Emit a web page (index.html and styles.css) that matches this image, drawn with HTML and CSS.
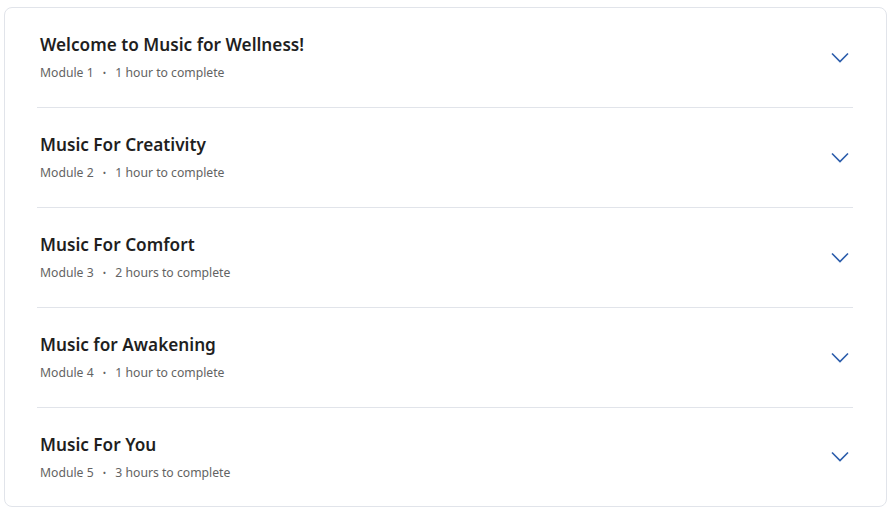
FILE: index.html
```html
<!DOCTYPE html>
<html lang="en">
<head>
<meta charset="UTF-8">
<meta name="viewport" content="width=device-width, initial-scale=1.0">
<link rel="stylesheet" href="styles.css">
<title>Modules</title>
</head>
<body>
  <div class="modules">
    <div class="module">
      <div class="info">
        <h2>Welcome to Music for Wellness!</h2>
        <p>Module 1 <span class="dot">•</span> 1 hour to complete</p>
      </div>
      <svg class="chev" width="18" height="12" viewBox="0 0 18 12"><path d="M1 1.5l8 8 8-8" fill="none" stroke="#2a5cab" stroke-width="1.6"/></svg>
    </div>
    <div class="module">
      <div class="info">
        <h2>Music For Creativity</h2>
        <p>Module 2 <span class="dot">•</span> 1 hour to complete</p>
      </div>
      <svg class="chev" width="18" height="12" viewBox="0 0 18 12"><path d="M1 1.5l8 8 8-8" fill="none" stroke="#2a5cab" stroke-width="1.6"/></svg>
    </div>
    <div class="module">
      <div class="info">
        <h2>Music For Comfort</h2>
        <p>Module 3 <span class="dot">•</span> 2 hours to complete</p>
      </div>
      <svg class="chev" width="18" height="12" viewBox="0 0 18 12"><path d="M1 1.5l8 8 8-8" fill="none" stroke="#2a5cab" stroke-width="1.6"/></svg>
    </div>
    <div class="module">
      <div class="info">
        <h2>Music for Awakening</h2>
        <p>Module 4 <span class="dot">•</span> 1 hour to complete</p>
      </div>
      <svg class="chev" width="18" height="12" viewBox="0 0 18 12"><path d="M1 1.5l8 8 8-8" fill="none" stroke="#2a5cab" stroke-width="1.6"/></svg>
    </div>
    <div class="module">
      <div class="info">
        <h2>Music For You</h2>
        <p>Module 5 <span class="dot">•</span> 3 hours to complete</p>
      </div>
      <svg class="chev" width="18" height="12" viewBox="0 0 18 12"><path d="M1 1.5l8 8 8-8" fill="none" stroke="#2a5cab" stroke-width="1.6"/></svg>
    </div>
  </div>
</body>
</html>
```

FILE: styles.css
```css
body {
  margin: 0;
  padding: 7px 6px 0 4px;
  background-color: #fff;
  font-family: "Noto Sans", Arial, sans-serif;
}

.modules {
  border: 1px solid #e1e4ea;
  border-radius: 8px;
  padding: 0 33px 0 32px;
  box-sizing: border-box;
  width: 883px;
  height: 500px;
}

.module {
  display: flex;
  align-items: center;
  justify-content: space-between;
  height: 100px;
  box-sizing: border-box;
  border-bottom: 1px solid #e1e4ea;
  padding: 0 4px 0 3px;
}

.module:last-child {
  border-bottom: none;
  height: 98px;
}

.info h2 {
  margin: 0;
  font-size: 17.2px;
  font-weight: 600;
  color: #1f1f1f;
  line-height: 24px;
}

.info p {
  margin: 7px 0 0;
  font-size: 12.2px;
  color: #636363;
  line-height: 18px;
}

.dot {
  font-size: 9px;
  margin: 0 6px;
  vertical-align: 1px;
}

.chev {
  margin-top: 0;
}
```
